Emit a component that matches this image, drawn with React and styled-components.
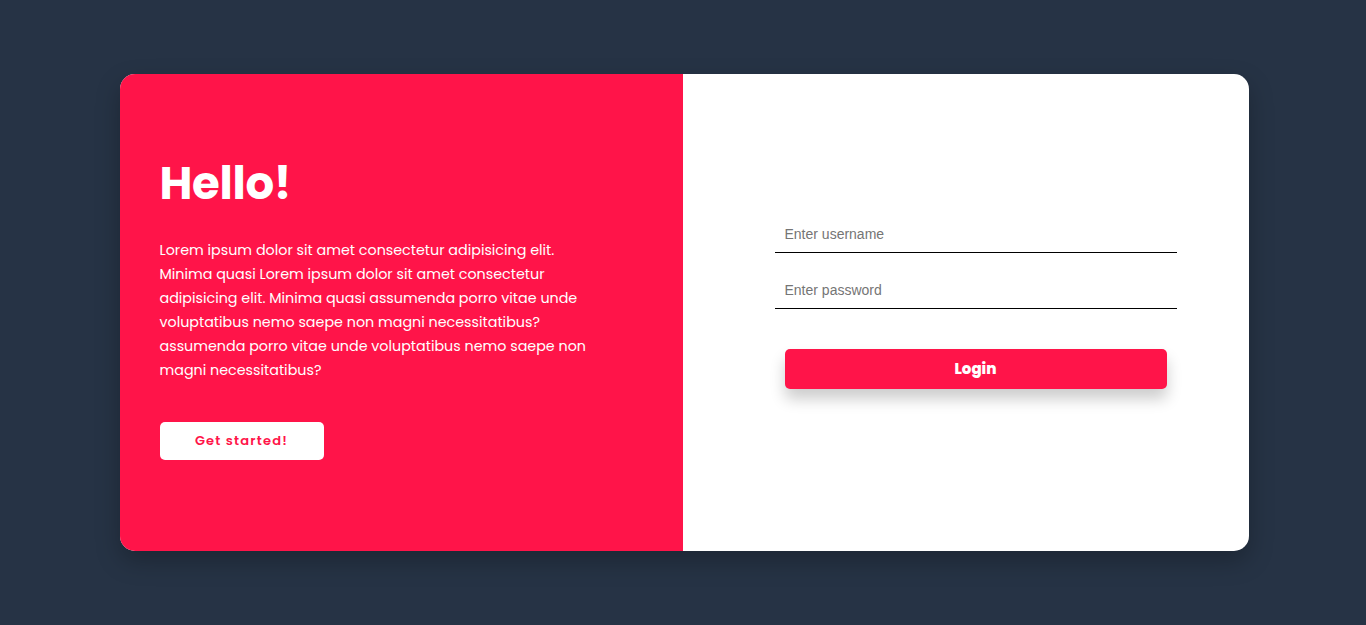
import React from "react";
import styled, { createGlobalStyle } from "styled-components";

const GlobalStyle = createGlobalStyle`
  * {
    box-sizing: border-box;
  }
  body {
    margin: 0;
    background: #263345;
    font-family: "Poppins", "Open Sans", sans-serif;
  }
`;

const Page = styled.div`
  display: flex;
  align-items: center;
  justify-content: center;
  height: 100vh;
  padding-left: 2px;
`;

const Card = styled.div`
  display: grid;
  grid-template-columns: 563px 1fr;
  width: 1129px;
  height: 477px;
  border-radius: 15px;
  overflow: hidden;
  background: #fff;
  box-shadow: 0 10px 25px rgba(0, 0, 0, 0.25);
`;

const Intro = styled.section`
  display: flex;
  flex-direction: column;
  justify-content: center;
  padding: 0 40px 8px;
  background: #ff1449;
  color: #fff;
`;

const Title = styled.h1`
  margin: 0 0 28px;
  font-size: 45px;
  font-weight: 700;
  line-height: 52px;
  letter-spacing: -0.3px;
`;

const Text = styled.p`
  margin: 0 0 40px;
  max-width: 440px;
  font-size: 14.3px;
  line-height: 24px;
  font-weight: 400;
`;

const StartButton = styled.button`
  width: 164px;
  height: 38px;
  border: none;
  border-radius: 5px;
  background: #fff;
  color: #ff1449;
  font-family: inherit;
  font-size: 13px;
  font-weight: 600;
  letter-spacing: 1.2px;
  cursor: pointer;
`;

const FormSide = styled.section`
  display: flex;
  flex-direction: column;
  justify-content: center;
  padding: 0 72px 20px 92px;
`;

const Field = styled.input`
  display: block;
  width: 100%;
  height: 36px;
  margin-bottom: 20px;
  padding: 0 10px;
  border: none;
  border-bottom: 1px solid #000;
  outline: none;
  font-family: "Liberation Sans", Arial, sans-serif;
  font-size: 14px;
  color: #222;

  &::placeholder {
    color: #757575;
  }
`;

const LoginButton = styled.button`
  align-self: center;
  width: 382px;
  height: 40px;
  margin-top: 20px;
  border: none;
  border-radius: 5px;
  background: #ff1449;
  color: #fff;
  font-family: inherit;
  font-size: 15px;
  font-weight: 800;
  box-shadow: 0 10px 15px rgba(0, 0, 0, 0.2);
  cursor: pointer;
`;

const App = () => {
  return (
    <>
      <GlobalStyle />
      <Page>
        <Card>
          <Intro>
            <Title>Hello!</Title>
            <Text>
              Lorem ipsum dolor sit amet consectetur adipisicing elit. Minima
              quasi Lorem ipsum dolor sit amet consectetur adipisicing elit.
              Minima quasi assumenda porro vitae unde voluptatibus nemo saepe
              non magni necessitatibus? assumenda porro vitae unde voluptatibus
              nemo saepe non magni necessitatibus?
            </Text>
            <StartButton>Get started!</StartButton>
          </Intro>
          <FormSide>
            <Field type="text" placeholder="Enter username" />
            <Field type="password" placeholder="Enter password" />
            <LoginButton>Login</LoginButton>
          </FormSide>
        </Card>
      </Page>
    </>
  );
};

export default App;
